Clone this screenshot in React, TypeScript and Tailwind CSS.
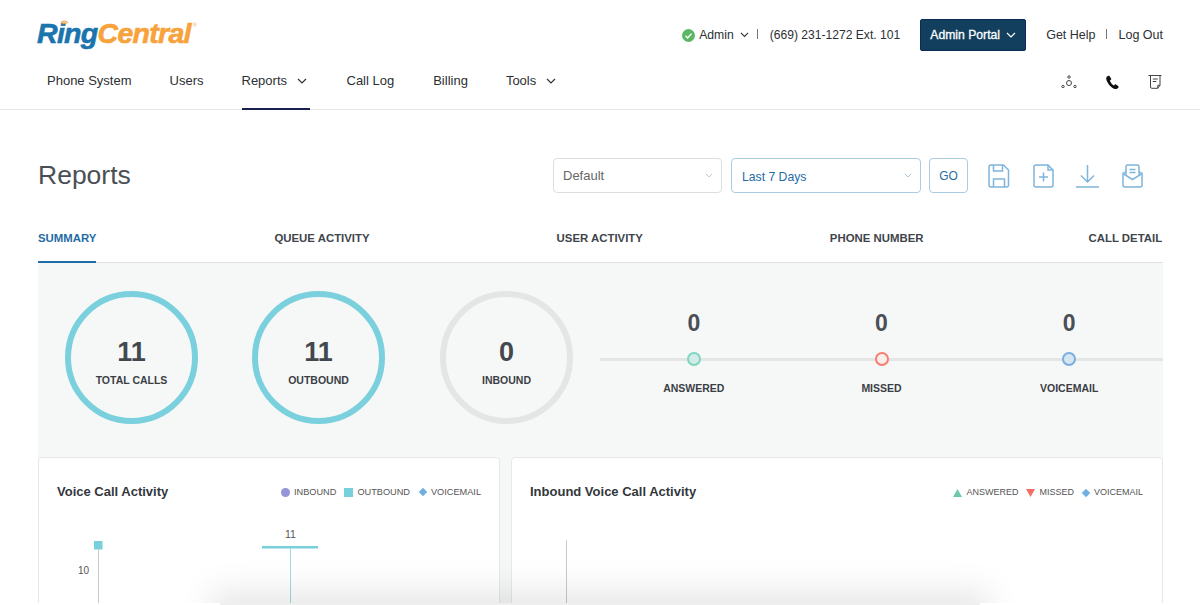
import React from "react";

const Chevron = ({ className = "", color = "#333", w = 10 }: { className?: string; color?: string; w?: number }) => (
  <svg width={w} height={w * 0.6} viewBox="0 0 10 6" className={className} fill="none" stroke={color} strokeWidth="1.2">
    <path d="M1 1l4 4 4-4" />
  </svg>
);

const Logo = () => (
  <div className="relative flex h-[32px] items-center font-['Liberation_Sans',Arial,sans-serif] text-[28.500px] font-bold italic leading-none tracking-[-0.7px] [-webkit-text-stroke:0.6px_currentColor]">
    <span className="text-[#1a74ad]">Ring</span>
    <span className="text-[#f7a23b]">Central</span>
    <svg width="10" height="6" viewBox="0 0 12 7" className="absolute left-[23px] top-[2px]" fill="none" stroke="#f7a23b" strokeWidth="1.3">
      <path d="M1 4.500c2.500-3 6-3 8.500 0M3 6c1.500-1.500 3.200-1.500 4.500 0" />
    </svg>
    <span className="absolute left-[156px] top-[6px] text-[5px] font-normal not-italic tracking-normal text-[#f7a23b] [-webkit-text-stroke:0]">®</span>
  </div>
);

const Check = () => (
  <svg width="13" height="13" viewBox="0 0 13 13">
    <circle cx="6.500" cy="6.500" r="6.500" fill="#5cb765" />
    <path d="M3.500 6.800l2.100 2.100 3.900-4.300" fill="none" stroke="#fff" strokeWidth="1.400" />
  </svg>
);

const Sep = ({ className = "" }: { className?: string }) => <span className={`h-[10px] w-px bg-[#777] ${className}`} />;

const TopBar = () => (
  <div className="flex h-[64px] items-start justify-between">
    <div className="pt-[17px]">
      <Logo />
    </div>
    <div className="flex items-center pt-[19px] text-[12.500px] text-[#2c2f33]">
      <Check />
      <span className="ml-[4px] text-[12.200px]">Admin</span>
      <Chevron className="ml-[6px]" w={9} />
      <Sep className="mb-[3px] ml-[8px]" />
      <span className="ml-[12px] text-[12.100px]">(669) 231-1272 Ext. 101</span>
      <button className="ml-[20px] flex h-[32px] w-[106px] items-center justify-center gap-[6px] rounded-[2px] border border-[#0c2a55] bg-[#123f5e] text-[12.200px] font-medium text-white [-webkit-text-stroke:0.3px_#fff]">
        Admin Portal
        <Chevron color="#fff" w={10} />
      </button>
      <span className="ml-[20px]">Get Help</span>
      <Sep className="mb-[3px] ml-[10px]" />
      <span className="ml-[12px]">Log Out</span>
    </div>
  </div>
);

const navItems: { label: string; ml: string; chevron?: boolean; active?: boolean }[] = [
  { label: "Phone System", ml: "ml-[10px]" },
  { label: "Users", ml: "ml-[38px]" },
  { label: "Reports", ml: "ml-[38px]", chevron: true, active: true },
  { label: "Call Log", ml: "ml-[37px]" },
  { label: "Billing", ml: "ml-[39px]" },
  { label: "Tools", ml: "ml-[38px]", chevron: true },
];

const NavBar = () => (
  <div className="flex h-[45px] items-stretch justify-between">
    <nav className="flex items-stretch text-[13px] text-[#2c2f33]">
      {navItems.map((n) => (
        <div
          key={n.label}
          className={`${n.ml} flex items-center ${n.active ? "h-[46px] w-[68px] border-b-2 border-[#1b1f4e] pb-[10px]" : "h-[45px] pb-[11px]"}`}
        >
          <span>{n.label}</span>
          {n.chevron && <Chevron className="ml-[10px]" w={10} />}
        </div>
      ))}
    </nav>
    <div className="flex items-start pt-[10px] pr-[1px]">
      <svg width="16" height="16" viewBox="0 0 16 16" fill="none" stroke="#444" strokeWidth="1">
        <circle cx="8" cy="9" r="2.500" />
        <circle cx="8" cy="3" r="1.200" />
        <circle cx="2" cy="12.500" r="1.200" />
        <circle cx="14" cy="12.500" r="1.200" />
      </svg>
      <svg width="15" height="17" viewBox="0 0 15 16" className="ml-[28px]" fill="#111">
        <path d="M3.400 1.200c-1.200.4-2.400 1.400-2.200 3 .4 3.700 4.700 9.300 8.800 10.300 1.500.4 2.900-.6 3.600-1.800.2-.4.1-.7-.2-1L11 10c-.4-.3-.8-.2-1.100.1l-.9.900c-1.800-.8-3.500-3-4.100-5l1-.7c.4-.3.500-.7.300-1.100L4.500 1.600c-.3-.4-.7-.5-1.100-.4z" />
      </svg>
      <svg width="14" height="15" viewBox="0 0 14 15" className="ml-[28px]" fill="none" stroke="#444" strokeWidth="1">
        <path d="M.5 1.500h13M2.500 1.500v11.500c0 .8.500 1.300 1.300 1.300h6l2.200-3v-9.800M4.800 5h5M4.800 7.500h3.500M9.800 14.300v-3h2.200" />
      </svg>
    </div>
  </div>
);

const B = "#7fb5da";

const ActionIcons = () => (
  <div className="ml-[20px] flex items-center">
    <svg width="22" height="24" viewBox="0 0 22 24" fill="none" stroke={B} strokeWidth="1.500">
      <path d="M3 1h12.500L20.500 6v15a2 2 0 0 1-2 2H3a2 2 0 0 1-2-2V3a2 2 0 0 1 2-2z" />
      <path d="M5.500 1v6h9V1M5.500 23v-8h11v8" />
    </svg>
    <svg width="21" height="24" viewBox="0 0 21 24" className="ml-[23px]" fill="none" stroke={B} strokeWidth="1.500">
      <path d="M3 1h12l5 5v15a2 2 0 0 1-2 2H3a2 2 0 0 1-2-2V3a2 2 0 0 1 2-2z" />
      <path d="M15 1v5h5M10.500 8.500v9M6 13h9" />
    </svg>
    <svg width="23" height="24" viewBox="0 0 23 24" className="ml-[22px]" fill="none" stroke={B} strokeWidth="1.500">
      <path d="M11.500 1v17M5 11.500l6.500 6.500L18 11.500M0 23h23" />
    </svg>
    <svg width="21" height="24" viewBox="0 0 21 24" className="ml-[23px]" fill="none" stroke={B} strokeWidth="1.500">
      <path d="M4 11V2.500A1.500 1.500 0 0 1 5.500 1h10A1.500 1.500 0 0 1 17 2.500V11M1 9.500V21a2 2 0 0 0 2 2h15a2 2 0 0 0 2-2V9.500l-9.500 6zM1 9.500L4 7.500M20 9.500l-3-2M7.500 5.500h6M7.500 8.500h6" />
    </svg>
  </div>
);

const Toolbar = () => (
  <div className="flex h-[35px] items-center justify-between">
    <h1 className="text-[26.500px] font-normal leading-none text-[#4a4f55]">Reports</h1>
    <div className="flex items-center pr-[20px]">
      <div className="flex h-[35px] w-[169px] items-center justify-between rounded-[4px] border border-[#dcdfe0] pl-[9px] pr-[8px] text-[13px] text-[#666]">
        Default
        <Chevron color="#c4c8ca" w={8} />
      </div>
      <div className="ml-[9px] flex h-[35px] w-[190px] items-center justify-between rounded-[4px] border border-[#a9cce3] pl-[10px] pr-[8px] pt-[3px] text-[12.200px] text-[#1f6ca6]">
        Last 7 Days
        <Chevron color="#a9c4d8" className="mb-[4px]" w={8} />
      </div>
      <button className="ml-[8px] h-[35px] w-[39px] rounded-[4px] border border-[#a9cce3] text-[12px] text-[#1f6ca6]">GO</button>
      <ActionIcons />
    </div>
  </div>
);

const tabs: { label: string; ml: string; active?: boolean }[] = [
  { label: "SUMMARY", ml: "", active: true },
  { label: "QUEUE ACTIVITY", ml: "ml-[178px]" },
  { label: "USER ACTIVITY", ml: "ml-[187px]" },
  { label: "PHONE NUMBER", ml: "ml-[187px]" },
  { label: "CALL DETAIL", ml: "ml-[165px]" },
];

const Tabs = () => (
  <div className="mt-[26px] flex h-[44px] border-b border-[#dfe1e2] text-[11.400px] font-bold">
    {tabs.map((t) => (
      <div
        key={t.label}
        className={`${t.ml} h-[44px] whitespace-nowrap pt-[11px] ${t.active ? "border-b-2 border-[#1f6ca6] text-[#1f6ca6]" : "text-[#40454b]"}`}
      >
        {t.label}
      </div>
    ))}
  </div>
);

const Ring = ({ value, label, border, ml }: { value: string; label: string; border: string; ml: string }) => (
  <div className={`${ml} flex h-[133px] w-[133px] shrink-0 flex-col items-center justify-center rounded-full border-[6px] pt-[10px] ${border}`}>
    <span className="text-[27px] font-bold leading-none text-[#43484e]">{value}</span>
    <span className="mt-[9px] text-[10.500px] font-bold leading-none text-[#3b3f45]">{label}</span>
  </div>
);

const steps = [
  { label: "ANSWERED", cls: "border-[#7fd6bd] bg-[#d3ebe9]" },
  { label: "MISSED", cls: "border-[#f97d72] bg-[#f9efea]" },
  { label: "VOICEMAIL", cls: "border-[#79aee0] bg-[#d6e6f1]" },
];

const Steps = () => (
  <div className="relative ml-[27px] flex h-[133px] flex-1 pt-[20px]">
    <div className="absolute left-0 right-0 top-[67px] h-[3px] bg-[#e4e5e5]" />
    {steps.map((s) => (
      <div key={s.label} className="relative flex flex-1 flex-col items-center">
        <span className="text-[23px] font-bold leading-[24px] text-[#4a4f55]">0</span>
        <span className={`mt-[17px] h-[14px] w-[14px] rounded-full border-2 ${s.cls}`} />
        <span className="mt-[17px] text-[10.500px] font-bold leading-none text-[#3b3f45]">{s.label}</span>
      </div>
    ))}
  </div>
);

const Leg = ({ icon, text, ml = "" }: { icon: React.ReactNode; text: string; ml?: string }) => (
  <span className={`${ml} flex items-center gap-[4px]`}>
    {icon}
    {text}
  </span>
);

const Left = () => (
  <section className="h-[160px] w-[462px] shrink-0 rounded-t-[4px] border border-[#e5e8ea] bg-white">
    <div className="flex items-center justify-between pl-[18px] pr-[18px] pt-[26px]">
      <h2 className="text-[13px] font-bold leading-[16px] text-[#33373c]">Voice Call Activity</h2>
      <div className="flex items-center pt-[1px] text-[9.200px] text-[#555]">
        <Leg text="INBOUND" icon={<span className="h-[9px] w-[9px] rounded-full bg-[#9595d8]" />} />
        <Leg text="OUTBOUND" ml="ml-[8px]" icon={<span className="h-[9px] w-[9px] bg-[#77d0dc]" />} />
        <Leg text="VOICEMAIL" ml="ml-[9px]" icon={<span className="mx-[1px] h-[6px] w-[6px] rotate-45 bg-[#71aee3]" />} />
      </div>
    </div>
    <svg width="460" height="120" viewBox="0 0 460 120" className="block">
      <rect x="55" y="41" width="8.500" height="8.500" fill="#77d0dc" />
      <line x1="59.500" y1="49" x2="59.500" y2="120" stroke="#c9c9c9" />
      <text x="50" y="74" textAnchor="end" fontSize="10" fill="#555" fontFamily="Liberation Sans">10</text>
      <text x="251.500" y="38" textAnchor="middle" fontSize="10.500" fill="#555" fontFamily="Liberation Sans">11</text>
      <rect x="223" y="46" width="56" height="2.500" fill="#77d0dc" />
      <line x1="251.500" y1="48" x2="251.500" y2="120" stroke="#9adce6" />
    </svg>
  </section>
);

const Right = () => (
  <section className="ml-[11px] h-[160px] w-[652px] shrink-0 rounded-t-[4px] border border-[#e5e8ea] bg-white">
    <div className="flex items-center justify-between pl-[18px] pr-[19px] pt-[26px]">
      <h2 className="text-[13px] font-bold leading-[16px] text-[#33373c]">Inbound Voice Call Activity</h2>
      <div className="flex items-center pt-[1px] text-[9px] text-[#555]">
        <Leg text="ANSWERED" icon={<svg width="9" height="8" viewBox="0 0 9 8"><path d="M4.500 0l4.500 8H0z" fill="#6cc9ab" /></svg>} />
        <Leg text="MISSED" ml="ml-[8px]" icon={<svg width="9" height="8" viewBox="0 0 9 8"><path d="M0 0h9L4.500 8z" fill="#f46f66" /></svg>} />
        <Leg text="VOICEMAIL" ml="ml-[8px]" icon={<span className="mx-[1px] h-[6px] w-[6px] rotate-45 bg-[#71aee3]" />} />
      </div>
    </div>
    <svg width="650" height="120" viewBox="0 0 650 120" className="block">
      <line x1="54.500" y1="40" x2="54.500" y2="120" stroke="#c9c9c9" />
    </svg>
  </section>
);

export default function App() {
  return (
    <div className="relative h-[605px] w-[1200px] overflow-hidden bg-white font-['Liberation_Sans',Arial,sans-serif]">
      <header className="h-[110px] border-b border-[#e6e7e8] px-[37px]">
        <TopBar />
        <NavBar />
      </header>
      <main className="pl-[38px] pr-[37px]">
        <div className="pt-[48px]">
          <Toolbar />
        </div>
        <Tabs />
        <div className="bg-[#f6f7f7] pt-[28px]">
          <div className="flex">
            <Ring ml="ml-[27px]" value="11" label="TOTAL CALLS" border="border-[#7bd0de]" />
            <Ring ml="ml-[54px]" value="11" label="OUTBOUND" border="border-[#7bd0de]" />
            <Ring ml="ml-[55px]" value="0" label="INBOUND" border="border-[#e4e5e5]" />
            <Steps />
          </div>
          <div className="mt-[33px] flex">
            <Left />
            <Right />
          </div>
        </div>
      </main>
      <div className="pointer-events-none absolute left-[225px] top-[606px] h-[20px] w-[750px] shadow-[0_0_34px_14px_rgba(0,0,0,0.1)]" />
      <div className="absolute bottom-0 left-0 h-[2px] w-full bg-white" />
      <div className="absolute bottom-0 left-[220px] h-[2px] w-[760px] bg-[#efefef]" />
    </div>
  );
}
